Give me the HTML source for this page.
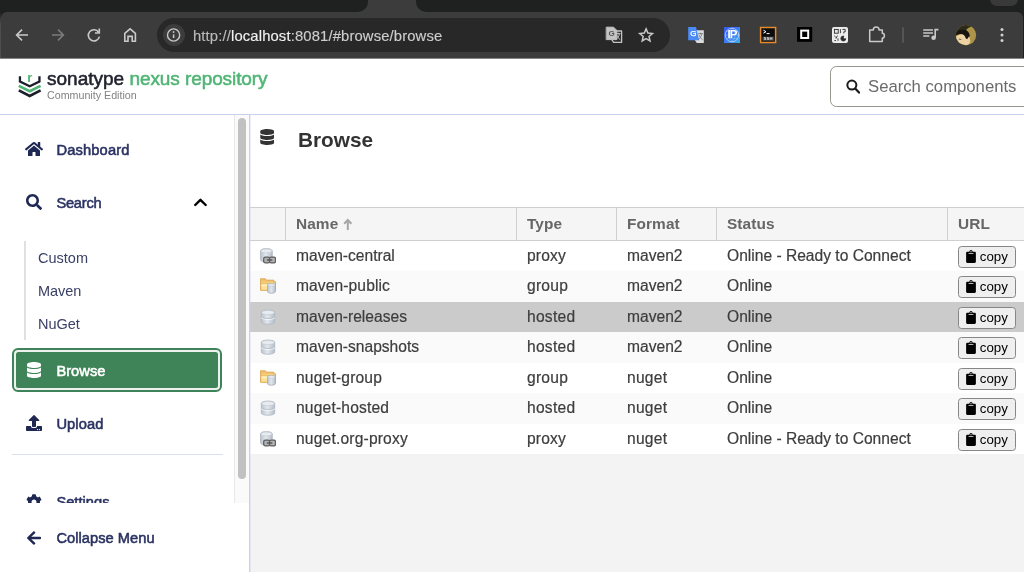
<!DOCTYPE html>
<html lang="en">
<head>
<meta charset="utf-8">
<title>Sonatype Nexus Repository</title>
<style>
*{box-sizing:border-box;margin:0;padding:0}
html,body{width:1024px;height:572px;overflow:hidden;background:#fff;font-family:"Liberation Sans",sans-serif}
body{position:relative}
.abs{position:absolute}
/* ---------- browser chrome ---------- */
#tabstrip{left:0;top:0;width:1024px;height:58px;background:#1f2120;border-bottom:1px solid #858585;box-sizing:content-box}
#toolbar{left:1px;top:12px;width:1022px;height:46px;background:#3c3c3c;border-top-left-radius:6px;border-top-right-radius:6px}
#chromeline{left:0;top:12px;width:1px;height:46px;background:linear-gradient(#1f2120,#4c4c4c 12px,#505050)}
#urlpill{left:157px;top:18px;width:513px;height:34px;border-radius:17px;background:#282828}
#infocirc{left:163px;top:24px;width:22px;height:22px;border-radius:11px;background:#3c3c3c}
#urltext{left:193px;top:26.500px;-webkit-text-stroke:0.150px;font-size:14.800px;line-height:18px;color:#e4e4e4;white-space:nowrap;letter-spacing:0.140px}
/* ---------- app header ---------- */
#apphead{left:0;top:59px;width:1024px;height:56px;background:#fff;border-bottom:1px solid #c9d0ee}
#brand1{left:47px;top:67.800px;font-size:19px;line-height:22px;font-weight:normal;white-space:nowrap;color:#23232f;-webkit-text-stroke:0.550px #23232f;letter-spacing:0px}
#brand1 span{color:#4fb574;-webkit-text-stroke:0.550px #4fb574;letter-spacing:-0.080px}
#brand2{left:47px;top:88px;font-size:10.700px;line-height:14px;color:#828282;white-space:nowrap}
#searchbox{left:830px;top:66.300px;width:210px;height:40.400px;border:1.300px solid #96968e;border-radius:6.500px;background:#fff}
#searchtxt{left:868px;top:76px;font-size:16.700px;line-height:21px;color:#6b6b6b;white-space:nowrap}
/* ---------- sidebar ---------- */
#sidebar{left:0;top:115px;width:236px;height:457px;background:#fff}
#sbtrack{left:234px;top:115px;width:15px;height:388px;background:#fafafa;border-left:1px solid #e8e8e8}
#sbthumb{left:238px;top:118px;width:8px;height:361px;border-radius:4px;background:#c1c1c1}
#vline{left:249px;top:115px;width:1px;height:457px;background:#c9d0ee}
.nav{font-weight:normal;font-size:14.700px;line-height:18px;color:#2a3262;-webkit-text-stroke:0.550px;white-space:nowrap}
.sub{font-size:14.5px;line-height:18px;color:#3a4066;white-space:nowrap}
#subline{left:24px;top:241px;width:2px;height:99px;background:#e0e0e0}
#browsebtn{left:12px;top:347.700px;width:210.400px;height:44.800px;border-radius:6px;background:#edf2f1;border:2.100px solid #3f8358}
#browsebtn i{position:absolute;left:2.100px;top:2.100px;right:2.100px;bottom:2.100px;background:#3f8358;border-radius:2.500px}
#hr{left:12px;top:454px;width:211px;height:1px;background:#dcdff0}
#collapse{left:0;top:503px;width:249px;height:69px;background:#fff}
/* ---------- main ---------- */
#main{left:250px;top:115px;width:774px;height:457px;background:#fff}
#title{left:298px;top:127px;font-size:20.800px;line-height:26px;font-weight:bold;color:#333;white-space:nowrap}
#gridbg{left:250px;top:207px;width:774px;height:365px;background:#f3f3f3}
#ghead{left:250px;top:207px;width:774px;height:34px;background:#f5f5f5;border-top:1px solid #cfcfcf;border-bottom:1px solid #cfcfcf}
.csep{top:208px;width:1px;height:32px;background:#cfcfcf}
.hd{top:214.500px;letter-spacing:0.100px;font-size:15.400px;line-height:18px;font-weight:bold;color:#666;white-space:nowrap}
.row{left:250px;width:774px;height:31px}
.c{font-size:15.600px;line-height:18px;color:#3d3d3d;-webkit-text-stroke:0.200px #3d3d3d;white-space:nowrap}
.btn{left:958px;width:58px;height:21.500px;border:1.200px solid #868686;border-radius:3.500px;background:#efefef}
.btn span{position:absolute;left:20.800px;top:2px;font-size:13.3px;line-height:16px;color:#000}
.btn svg{position:absolute;left:7px;top:2.5px}
</style>
</head>
<body>
<div id="wrap" style="position:absolute;left:0;top:0;width:1024px;height:572px;overflow:hidden;will-change:transform">
<svg width="0" height="0" style="position:absolute">
<defs>
<linearGradient id="gcyl" x1="0" y1="0" x2="1" y2="0"><stop offset="0" stop-color="#b9c2cc"/><stop offset="0.45" stop-color="#e4e8ee"/><stop offset="1" stop-color="#b4bdc8"/></linearGradient>
<linearGradient id="gfold" x1="0" y1="0" x2="0" y2="1"><stop offset="0" stop-color="#f6d27a"/><stop offset="1" stop-color="#fbe7a3"/></linearGradient>
<symbol id="ic-hosted" viewBox="0 0 16 16">
<path d="M1.300 3.400 C1.300 0.300 14.700 0.300 14.700 3.400 V12.900 C14.700 16 1.300 16 1.300 12.900Z" fill="url(#gcyl)" stroke="#aeb7c2" stroke-width="0.800"/>
<ellipse cx="8" cy="3.500" rx="6.300" ry="2.100" fill="#e8ebf0" stroke="#bcc4ce" stroke-width="0.500"/>
<path d="M1.500 8.600 C2.500 10.900 13.500 10.900 14.500 8.600" fill="none" stroke="#f4f6f9" stroke-width="1.100"/>
<path d="M1.500 7.800 C2.500 10.100 13.500 10.100 14.500 7.800" fill="none" stroke="#aab4c0" stroke-width="0.700"/>
</symbol>
<symbol id="ic-proxy" viewBox="0 0 16 16">
<path d="M0.500 3 C0.500 -0.300 12.300 -0.300 12.300 3 V11.800 C12.300 14.800 0.500 14.800 0.500 11.800Z" fill="url(#gcyl)" stroke="#aeb7c2" stroke-width="0.800"/>
<ellipse cx="6.400" cy="3" rx="5.400" ry="1.900" fill="#e8ebf0" stroke="#bcc4ce" stroke-width="0.500"/>
<rect x="3.700" y="9.100" width="6" height="5.800" rx="1.700" fill="#b4b4b4" stroke="#5e5e5e" stroke-width="1.300"/>
<rect x="9.500" y="9.100" width="6" height="5.800" rx="1.700" fill="#b4b4b4" stroke="#5e5e5e" stroke-width="1.300"/>
<rect x="6.600" y="11.200" width="6" height="1.600" rx="0.800" fill="#5a5a5a"/>
</symbol>
<symbol id="ic-group" viewBox="0 0 16 16">
<path d="M0.600 0.800 H5.400 L6.600 2.200 H13.800 V3.800 H15.500 V12.300 H0.600Z" fill="#f1c46f" stroke="#dda24e" stroke-width="0.900" stroke-linejoin="round"/>
<path d="M1.400 4.200 H14.700 V11.600 H1.400Z" fill="url(#gfold)"/>
<path d="M1.200 5.700 H8.500" stroke="#e2ad58" stroke-width="0.700" fill="none"/>
<path d="M1.400 6.300 H8.500 V8.400 H1.400Z" fill="#fdf0bd"/>
<path d="M7.500 7 C7.500 4.900 15.500 4.900 15.500 7 V13.500 C15.500 15.800 7.500 15.800 7.500 13.500Z" fill="url(#gcyl)" stroke="#a3adba" stroke-width="0.800"/>
<ellipse cx="11.500" cy="7" rx="3.600" ry="1.300" fill="#e9ecf1" stroke="#b5bec9" stroke-width="0.500"/>
</symbol>
<symbol id="ic-clip" viewBox="0 0 384 512">
<path d="M384 112v352c0 26.500-21.500 48-48 48H48c-26.500 0-48-21.500-48-48V112c0-26.500 21.500-48 48-48h80c0-35.300 28.700-64 64-64s64 28.700 64 64h80c26.500 0 48 21.500 48 48zM192 40c-13.300 0-24 10.700-24 24s10.700 24 24 24 24-10.700 24-24-10.700-24-24-24m96 114v-20a6 6 0 0 0-6-6H102a6 6 0 0 0-6 6v20a6 6 0 0 0 6 6h180a6 6 0 0 0 6-6z"/>
</symbol>
<symbol id="fa-home" viewBox="0 0 576 512"><path d="M280.370 148.260L96 300.110V464a16 16 0 0 0 16 16l112.060-.290a16 16 0 0 0 15.920-16V368a16 16 0 0 1 16-16h64a16 16 0 0 1 16 16v95.640a16 16 0 0 0 16 16.050L464 480a16 16 0 0 0 16-16V300L295.670 148.260a12.190 12.190 0 0 0-15.300 0zM571.600 251.470L488 182.560V44.050a12 12 0 0 0-12-12h-56a12 12 0 0 0-12 12v72.610L318.470 43a48 48 0 0 0-61 0L4.340 251.470a12 12 0 0 0-1.600 16.900l25.500 31A12 12 0 0 0 45.150 301l235.220-193.740a12.190 12.190 0 0 1 15.300 0L530.900 301a12 12 0 0 0 16.900-1.600l25.500-31a12 12 0 0 0-1.700-16.930z"/></symbol>
<symbol id="fa-search" viewBox="0 0 512 512"><path d="M505 442.700L405.300 343c-4.500-4.500-10.600-7-17-7H372c27.600-35.300 44-79.700 44-128C416 93.100 322.900 0 208 0S0 93.100 0 208s93.100 208 208 208c48.300 0 92.700-16.400 128-44v16.300c0 6.400 2.500 12.500 7 17l99.700 99.700c9.400 9.400 24.600 9.400 33.900 0l28.300-28.300c9.400-9.400 9.400-24.600.1-34zM208 336c-70.700 0-128-57.200-128-128 0-70.700 57.200-128 128-128 70.700 0 128 57.200 128 128 0 70.700-57.200 128-128 128z"/></symbol>
<symbol id="fa-db" viewBox="0 0 448 512"><path d="M448 73.143v45.714C448 159.143 347.667 192 224 192S0 159.143 0 118.857V73.143C0 32.857 100.333 0 224 0s224 32.857 224 73.143zM448 176v102.857C448 319.143 347.667 352 224 352S0 319.143 0 278.857V176c48.125 33.143 136.208 48.572 224 48.572S399.874 209.143 448 176zm0 160v102.857C448 479.143 347.667 512 224 512S0 479.143 0 438.857V336c48.125 33.143 136.208 48.572 224 48.572S399.874 369.143 448 336z"/></symbol>
<symbol id="fa-upload" viewBox="0 0 512 512"><path d="M296 384h-80c-13.300 0-24-10.700-24-24V192h-87.700c-17.800 0-26.700-21.500-14.100-34.100L242.300 5.700c7.500-7.500 19.800-7.500 27.300 0l152.200 152.200c12.600 12.600 3.700 34.100-14.100 34.100H320v168c0 13.300-10.700 24-24 24zm216-8v112c0 13.300-10.700 24-24 24H24c-13.300 0-24-10.700-24-24V376c0-13.300 10.700-24 24-24h136v8c0 30.900 25.100 56 56 56h80c30.900 0 56-25.100 56-56v-8h136c13.300 0 24 10.700 24 24zm-124 88c0-11-9-20-20-20s-20 9-20 20 9 20 20 20 20-9 20-20zm64 0c0-11-9-20-20-20s-20 9-20 20 9 20 20 20 20-9 20-20z"/></symbol>
<symbol id="fa-cog" viewBox="0 0 512 512"><path d="M487.400 315.700l-42.600-24.600c4.300-23.200 4.300-47 0-70.200l42.600-24.600c4.900-2.800 7.100-8.600 5.500-14-11.100-35.600-30-67.800-54.700-94.600-3.800-4.100-10-5.100-14.800-2.300L380.800 110c-17.900-15.400-38.500-27.300-60.800-35.100V25.800c0-5.600-3.900-10.500-9.400-11.700-36.700-8.200-74.300-7.800-109.200 0-5.500 1.200-9.400 6.100-9.400 11.700V75c-22.200 7.900-42.800 19.800-60.800 35.100L88.700 85.500c-4.900-2.800-11-1.900-14.800 2.300-24.700 26.700-43.600 58.900-54.700 94.600-1.700 5.400.6 11.200 5.500 14L67.300 221c-4.300 23.200-4.300 47 0 70.200l-42.600 24.600c-4.900 2.800-7.100 8.600-5.500 14 11.100 35.600 30 67.800 54.700 94.600 3.800 4.100 10 5.100 14.800 2.300l42.600-24.600c17.900 15.400 38.500 27.300 60.800 35.100v49.200c0 5.600 3.900 10.500 9.400 11.700 36.700 8.200 74.300 7.800 109.200 0 5.500-1.200 9.400-6.100 9.400-11.700v-49.200c22.200-7.900 42.800-19.800 60.800-35.100l42.600 24.600c4.900 2.800 11 1.900 14.800-2.300 24.700-26.700 43.600-58.900 54.700-94.600 1.500-5.500-.7-11.300-5.600-14.100zM256 336c-44.100 0-80-35.900-80-80s35.900-80 80-80 80 35.900 80 80-35.900 80-80 80z"/></symbol>
<symbol id="fa-arrowl" viewBox="0 0 448 512"><path d="M257.500 445.100l-22.200 22.200c-9.400 9.400-24.600 9.400-33.900 0L7 273c-9.400-9.400-9.400-24.600 0-33.900L201.400 44.700c9.400-9.400 24.600-9.400 33.900 0l22.200 22.200c9.500 9.500 9.300 25-.4 34.300L136.600 216H424c13.300 0 24 10.700 24 24v32c0 13.300-10.700 24-24 24H136.600l120.500 114.800c9.800 9.300 10 24.800.4 34.300z"/></symbol>
</defs>
</svg>
<!-- browser chrome -->
<div class="abs" id="tabstrip"></div>
<div class="abs" id="toolbar"></div>
<div class="abs" id="chromeline"></div>
<div class="abs" id="urlpill"></div>
<div class="abs" id="infocirc"></div>
<!-- chrome icons -->
<div class="abs" style="left:356px;top:0;width:72px;height:12px;background:#3c3c3c"></div>
<div class="abs" style="left:338px;top:-4px;width:30px;height:16px;background:#1f2120;border-bottom-right-radius:10px"></div>
<div class="abs" style="left:416px;top:-4px;width:30px;height:16px;background:#1f2120;border-bottom-left-radius:10px"></div>
<div class="abs" style="left:990px;top:-8px;width:28px;height:14px;background:#393939;border-radius:7px"></div>
<svg class="abs" style="left:0;top:11px" width="1024" height="48" viewBox="0 11 1024 48" fill="none" stroke="#c9c9c9" stroke-width="1.6" stroke-linecap="round" stroke-linejoin="round">
<!-- back -->
<path d="M28 35 H17 M22 29.6 L16.6 35 L22 40.4" stroke-linecap="butt" stroke-linejoin="miter"/>
<!-- forward -->
<path d="M52 35 H63 M58 29.6 L63.4 35 L58 40.4" stroke="#7b7b7b" stroke-linecap="butt" stroke-linejoin="miter"/>
<!-- reload -->
<path d="M98.6 32.2 A5.6 5.6 0 1 0 99.4 36.6" stroke-linecap="butt"/>
<path d="M99.3 28.6 V33 H94.9" stroke-linecap="butt" stroke-linejoin="miter"/>
<!-- home -->
<path d="M124.8 41.3 V33.4 L130.1 28.9 L135.4 33.4 V41.3 H132.2 V36.4 H128 V41.3 Z" stroke-linejoin="miter"/>
<!-- info -->
<circle cx="173.6" cy="35" r="6.1" stroke-width="1.4"/>
<path d="M173.6 34.4 V38" stroke-width="1.5" stroke-linecap="butt"/>
<circle cx="173.6" cy="32" r="0.9" fill="#c9c9c9" stroke="none"/>
<!-- translate (omnibox) -->
<path d="M606.6 27.2 H613.6 L616.8 30.4 V39.6 H606.6 Z" fill="#c4c4c4" stroke="#c4c4c4" stroke-width="1"/>
<path d="M614 31 H621.6 V42.4 H613.6 L612 40" stroke="#c4c4c4" stroke-width="1.3"/>
<path d="M616 33.6 H620.2 M618.1 33 V34 M619.4 34 C619 36.6 617.6 38.4 616 39.4 M616.8 35.2 C617.4 37 618.6 38.6 620 39.6" stroke-width="0.9"/>
<!-- star -->
<path d="M646.10 28.83 L647.92 33.02 L652.47 33.47 L649.01 36.47 L650.01 40.93 L646.10 38.57 L642.19 40.93 L643.19 36.47 L639.73 33.47 L644.28 33.02 Z" stroke-width="1.5" stroke-linejoin="miter"/>
<!-- google translate ext -->
<path d="M696 30.2 H703.8 V43 H696.8 L694.6 39.8 Z" fill="#dcdcdc" stroke="none"/>
<path d="M688.2 27 H696 L699.2 40.2 H688.2 Z" fill="#4b8bf5" stroke="none"/>
<path d="M698.4 33.6 H702.6 M700.5 33 V34 M701.8 34 C701.4 36.6 700 38.4 698.4 39.4 M699.2 35.2 C699.8 37 701 38.6 702.4 39.6" stroke="#6b7a86" stroke-width="0.8"/>
<!-- IP ext -->
<linearGradient id="gip" x1="0" y1="0" x2="1" y2="1"><stop offset="0" stop-color="#3a55f0"/><stop offset="0.5" stop-color="#3a7df2"/><stop offset="1" stop-color="#3fb0ee"/></linearGradient>
<rect x="724" y="27" width="16" height="16" fill="url(#gip)" stroke="none"/>
<circle cx="732" cy="35" r="6.800" stroke="#d6e6ff" stroke-width="0.900" opacity="0.750"/>
<path d="M732 28.200 C728 32 728 38 732 41.800 M732 28.200 C736 32 736 38 732 41.800 M725.200 35 H738.800 M726.400 31.400 H737.600 M726.400 38.600 H737.600" stroke="#d6e6ff" stroke-width="0.500" opacity="0.550"/>
<!-- ssh ext -->
<rect x="760.600" y="27.500" width="15" height="15" fill="#0c0c0c" stroke="#e38b2f" stroke-width="1.500" stroke-linejoin="miter"/>
<path d="M763.400 30.200 L766 31.700 L763.400 33.200 M766.600 33.600 H769.600" stroke="#fff" stroke-width="1" stroke-linecap="butt" stroke-linejoin="miter"/>
<rect x="762.200" y="36.600" width="11.800" height="4.400" fill="#3a3a3a" stroke="none"/>
<!-- square ext -->
<rect x="797" y="27" width="15.200" height="14.800" fill="#000" stroke="none"/>
<rect x="801.200" y="30.600" width="7" height="7.400" stroke="#fff" stroke-width="2" stroke-linejoin="miter"/>
<!-- QR ext -->
<rect x="832" y="27" width="16" height="16" rx="2" fill="#ececec" stroke="none"/>
<g stroke="#2a2a2a" stroke-width="0.9" stroke-linecap="butt" stroke-linejoin="miter">
<rect x="834.400" y="29.400" width="3.800" height="3.800"/>
<path d="M836.300 31.300 h0.100 M840.400 29.200 v4 M842.400 29.400 h2.800 v2.400 h-1.400 v1.600 M834.200 35.800 l1.600 1.600 M837.400 35.600 l-1.400 3 M834.400 40.600 h1.600 M838 38.400 v2.400"/>
</g>
<path d="M843.400 36 A2.500 2.500 0 1 0 845.800 38.800 H843.400 Z" fill="#2a2a2a" stroke="#2a2a2a" stroke-width="0.800"/>
<!-- puzzle -->
<path d="M869.700 29.900 H873.300 A2.900 3 0 0 1 879.100 29.900 H882.300 V33.300 A2.100 2.350 0 0 1 882.300 38 V41.400 H869.700 Z" stroke-width="1.500"/>
<!-- separator -->
<path d="M903 27.200 V42.800" stroke="#606060" stroke-width="1.400" stroke-linecap="butt"/>
<!-- media -->
<path d="M923.200 29.900 H933 M923.200 33 H933 M923.200 36.100 H929.400" stroke-width="1.500" stroke-linecap="butt"/>
<path d="M935.200 37.600 V29.600 H938.400" stroke-width="1.600" stroke-linecap="butt" stroke-linejoin="miter"/>
<circle cx="933.600" cy="37.700" r="2.300" fill="#c9c9c9" stroke="none"/>
<!-- avatar -->
<clipPath id="avc"><circle cx="966" cy="35.100" r="10.200"/></clipPath>
<g clip-path="url(#avc)" stroke="none">
<rect x="955" y="24" width="22" height="23" fill="#ad9449"/>
<path d="M954.72 24.2 L972.04 24.2 L970.99 26.82 C967.31 27.87 965.74 29.97 965.74 32.07 L954.72 33.64 Z" fill="#2c2b19"/>
<ellipse cx="962.300" cy="40.700" rx="8" ry="6.400" fill="#ecd4a2"/>
<ellipse cx="968.47" cy="39.83" rx="1.26" ry="2.10" fill="#eccba2"/>
<path d="M955.25 35.22 C955.77 30.76 959.97 29.18 964.69 29.86 C967.84 30.39 969.52 33.12 969.83 36.0 L968.1 37.58 L967.21 39.31 L965.63 38.26 C965.22 35.74 963.12 33.75 960.49 34.06 C958.39 34.27 956.82 35.22 955.25 36.0 Z" fill="#18140f"/>
<ellipse cx="960.07" cy="39.31" rx="1.68" ry="0.63" fill="#8a7152" transform="rotate(12 960.07 39.31)"/>
</g>
<!-- menu dots -->
<g fill="#d2d2d2" stroke="none"><circle cx="1002" cy="29.500" r="1.500"/><circle cx="1002" cy="35" r="1.500"/><circle cx="1002" cy="40.500" r="1.500"/></g>
</svg>
<div class="abs" style="left:727.500px;top:27.500px;font-size:11.500px;line-height:13px;font-weight:bold;color:#fff;letter-spacing:-0.900px">IP</div>
<div class="abs" style="left:690.200px;top:28.800px;font-size:8px;line-height:10px;font-weight:normal;color:#fff;-webkit-text-stroke:0.250px #fff">G</div>
<div class="abs" style="left:608.600px;top:28.600px;font-size:8px;line-height:10px;font-weight:bold;color:#555">G</div>
<div class="abs" style="left:763.400px;top:36.800px;font-size:4.200px;line-height:4.400px;font-weight:bold;color:#eee;letter-spacing:0.300px">SSH</div>
<div class="abs" id="urltext"><span style="color:#b9b9b9">http://</span><span style="color:#f0f0f0">localhost</span><span style="color:#cdcdcd">:8081/#browse/browse</span></div>

<!-- app header -->
<div class="abs" id="apphead"></div>
<div class="abs" id="brand1">sonatype <span>nexus repository</span></div>
<div class="abs" id="brand2">Community Edition</div>
<div class="abs" id="searchbox"></div>
<svg class="abs" style="left:845px;top:78px" width="17" height="17" viewBox="0 0 17 17"><circle cx="6.850" cy="7.100" r="4.500" fill="none" stroke="#1b1b1b" stroke-width="2"/><path d="M10.200 10.500 L14 14.600" stroke="#1b1b1b" stroke-width="2.200" stroke-linecap="round"/></svg>
<div class="abs" id="searchtxt">Search components</div>

<!-- sidebar -->
<div class="abs" id="sidebar"></div>
<div class="abs" id="sbtrack"></div>
<div class="abs" id="sbthumb"></div>
<div class="abs" id="vline"></div>
<div class="abs nav" style="left:56.400px;top:141px;letter-spacing:0.149px">Dashboard</div>
<div class="abs nav" style="left:56.400px;top:194px;letter-spacing:-0.256px">Search</div>
<div class="abs" id="subline"></div>
<div class="abs sub" style="left:38px;top:249px;letter-spacing:0.005px">Custom</div>
<div class="abs sub" style="left:38px;top:282px;letter-spacing:-0.066px">Maven</div>
<div class="abs sub" style="left:38px;top:315px;letter-spacing:-0.044px">NuGet</div>
<div class="abs" id="browsebtn"><i></i></div>
<div class="abs nav" style="left:56.400px;top:362px;color:#fff;letter-spacing:0.020px">Browse</div>
<div class="abs nav" style="left:56.400px;top:415px;letter-spacing:0.091px">Upload</div>
<div class="abs" id="hr"></div>
<div class="abs nav" style="left:56.400px;top:493px;letter-spacing:0.003px">Settings</div>
<!-- icons -->
<svg class="abs" style="left:18px;top:73.400px" width="24" height="26" viewBox="0 0 24 26">
<polyline points="1.95,3.3 1.95,8.5 11.7,13.3 21.45,8.5 21.45,3.3" fill="none" stroke="#1c1f2a" stroke-width="2.3"/>
<polyline points="0.8,12.9 11.7,18.3 22.6,12.9" fill="none" stroke="#4fb574" stroke-width="2.7"/>
<polyline points="0.8,17.4 11.7,22.9 22.6,17.4" fill="none" stroke="#1c1f2a" stroke-width="2.7"/>
<text x="9.300" y="8.700" font-family="Liberation Sans, sans-serif" font-weight="bold" font-size="13" fill="#4fb574">r</text>
</svg>
<svg class="abs" style="left:25px;top:141.400px" width="18" height="16" fill="#1f2853"><use href="#fa-home"/></svg>
<svg class="abs" style="left:26px;top:194.3px" width="16" height="16" fill="#1f2853"><use href="#fa-search"/></svg>
<svg class="abs" style="left:190px;top:193px" width="22" height="18" viewBox="0 0 22 18"><polyline points="5.2,12 10.45,6.8 15.7,12" fill="none" stroke="#000" stroke-width="2.4" stroke-linecap="round" stroke-linejoin="round"/></svg>
<svg class="abs" style="left:27px;top:362.100px" width="14" height="16" fill="#fff"><use href="#fa-db"/></svg>
<svg class="abs" style="left:26px;top:415.3px" width="16" height="16" fill="#1f2853"><use href="#fa-upload"/></svg>
<svg class="abs" style="left:26px;top:493.5px" width="16" height="16" fill="#1f2853"><use href="#fa-cog"/></svg>
<div class="abs" id="collapse"></div>
<svg class="abs" style="left:27px;top:529.5px" width="14" height="16" fill="#1f2853"><use href="#fa-arrowl"/></svg>
<div class="abs nav" style="left:56.400px;top:529px;letter-spacing:0.017px">Collapse Menu</div>

<!-- main -->
<div class="abs" id="main"></div>
<svg class="abs" style="left:259.5px;top:129px" width="14.5" height="16" fill="#333" preserveAspectRatio="none"><use href="#fa-db"/></svg>
<div class="abs" id="title">Browse</div>
<div class="abs" id="gridbg"></div>
<div class="abs" id="ghead"></div>
<div class="abs csep" style="left:285px"></div>
<div class="abs csep" style="left:516px"></div>
<div class="abs csep" style="left:616px"></div>
<div class="abs csep" style="left:716px"></div>
<div class="abs csep" style="left:947px"></div>
<div class="abs hd" style="left:296px">Name</div>
<svg class="abs" style="left:343px;top:217.600px" width="10" height="13" viewBox="0 0 10 13"><path d="M4.800 12 V3 M1.200 5.800 L4.800 2 L8.400 5.800" fill="none" stroke="#a6a6a6" stroke-width="2"/></svg>
<div class="abs hd" style="left:527px">Type</div>
<div class="abs hd" style="left:627px">Format</div>
<div class="abs hd" style="left:727px">Status</div>
<div class="abs hd" style="left:958px">URL</div>
<!--ROWS-->
<div class="abs row" style="top:241px;background:#fff;height:30px"></div>
<svg class="abs" style="left:260px;top:247.5px" width="16" height="16" viewBox="0 0 16 16"><use href="#ic-proxy"/></svg>
<div class="abs c" style="left:296px;top:246.7px;letter-spacing:0px">maven-central</div>
<div class="abs c" style="left:527px;top:246.7px;letter-spacing:0.15px">proxy</div>
<div class="abs c" style="left:627px;top:246.7px;letter-spacing:0px">maven2</div>
<div class="abs c" style="left:727px;top:246.7px">Online - Ready to Connect</div>
<div class="abs btn" style="top:246px"><svg width="10" height="13" viewBox="0 0 10 13"><use href="#ic-clip"/></svg><span>copy</span></div>
<div class="abs row" style="top:271px;background:#fafafa;height:31px"></div>
<svg class="abs" style="left:260px;top:277.5px" width="16" height="16" viewBox="0 0 16 16"><use href="#ic-group"/></svg>
<div class="abs c" style="left:296px;top:276.7px;letter-spacing:0.1px">maven-public</div>
<div class="abs c" style="left:527px;top:276.7px;letter-spacing:0.25px">group</div>
<div class="abs c" style="left:627px;top:276.7px;letter-spacing:0px">maven2</div>
<div class="abs c" style="left:727px;top:276.7px">Online</div>
<div class="abs btn" style="top:276px"><svg width="10" height="13" viewBox="0 0 10 13"><use href="#ic-clip"/></svg><span>copy</span></div>
<div class="abs row" style="top:302px;background:#cbcbcb;height:30px"></div>
<svg class="abs" style="left:260px;top:308.5px" width="16" height="16" viewBox="0 0 16 16"><use href="#ic-hosted"/></svg>
<div class="abs c" style="left:296px;top:307.7px;letter-spacing:0px">maven-releases</div>
<div class="abs c" style="left:527px;top:307.7px;letter-spacing:0.25px">hosted</div>
<div class="abs c" style="left:627px;top:307.7px;letter-spacing:0px">maven2</div>
<div class="abs c" style="left:727px;top:307.7px">Online</div>
<div class="abs btn" style="top:307px"><svg width="10" height="13" viewBox="0 0 10 13"><use href="#ic-clip"/></svg><span>copy</span></div>
<div class="abs row" style="top:332px;background:#fafafa;height:31px"></div>
<svg class="abs" style="left:260px;top:338.5px" width="16" height="16" viewBox="0 0 16 16"><use href="#ic-hosted"/></svg>
<div class="abs c" style="left:296px;top:337.7px;letter-spacing:0px">maven-snapshots</div>
<div class="abs c" style="left:527px;top:337.7px;letter-spacing:0.25px">hosted</div>
<div class="abs c" style="left:627px;top:337.7px;letter-spacing:0px">maven2</div>
<div class="abs c" style="left:727px;top:337.7px">Online</div>
<div class="abs btn" style="top:337px"><svg width="10" height="13" viewBox="0 0 10 13"><use href="#ic-clip"/></svg><span>copy</span></div>
<div class="abs row" style="top:363px;background:#fff;height:30px"></div>
<svg class="abs" style="left:260px;top:369.5px" width="16" height="16" viewBox="0 0 16 16"><use href="#ic-group"/></svg>
<div class="abs c" style="left:296px;top:368.7px;letter-spacing:0.18px">nuget-group</div>
<div class="abs c" style="left:527px;top:368.7px;letter-spacing:0.25px">group</div>
<div class="abs c" style="left:627px;top:368.7px;letter-spacing:0.25px">nuget</div>
<div class="abs c" style="left:727px;top:368.7px">Online</div>
<div class="abs btn" style="top:368px"><svg width="10" height="13" viewBox="0 0 10 13"><use href="#ic-clip"/></svg><span>copy</span></div>
<div class="abs row" style="top:393px;background:#fafafa;height:31px"></div>
<svg class="abs" style="left:260px;top:399.5px" width="16" height="16" viewBox="0 0 16 16"><use href="#ic-hosted"/></svg>
<div class="abs c" style="left:296px;top:398.7px;letter-spacing:0.18px">nuget-hosted</div>
<div class="abs c" style="left:527px;top:398.7px;letter-spacing:0.25px">hosted</div>
<div class="abs c" style="left:627px;top:398.7px;letter-spacing:0.25px">nuget</div>
<div class="abs c" style="left:727px;top:398.7px">Online</div>
<div class="abs btn" style="top:398px"><svg width="10" height="13" viewBox="0 0 10 13"><use href="#ic-clip"/></svg><span>copy</span></div>
<div class="abs row" style="top:424px;background:#fff;height:30px"></div>
<svg class="abs" style="left:260px;top:430.5px" width="16" height="16" viewBox="0 0 16 16"><use href="#ic-proxy"/></svg>
<div class="abs c" style="left:296px;top:429.7px;letter-spacing:0.18px">nuget.org-proxy</div>
<div class="abs c" style="left:527px;top:429.7px;letter-spacing:0.15px">proxy</div>
<div class="abs c" style="left:627px;top:429.7px;letter-spacing:0.25px">nuget</div>
<div class="abs c" style="left:727px;top:429.7px">Online - Ready to Connect</div>
<div class="abs btn" style="top:429px"><svg width="10" height="13" viewBox="0 0 10 13"><use href="#ic-clip"/></svg><span>copy</span></div>
<!--/ROWS-->
<div class="abs" style="left:250px;top:115px;width:1px;height:457px;background:#c9d0ee;opacity:0.350"></div>
</div>
</body>
</html>
